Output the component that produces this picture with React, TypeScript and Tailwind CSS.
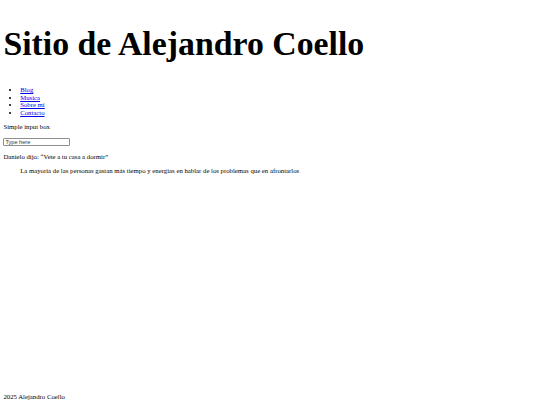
import React from 'react';

export default function App() {
  return (
    <div className="min-h-screen flex flex-col bg-white text-black px-[3.4px] font-['Liberation_Serif','Times_New_Roman',serif] text-[6.75px] leading-[7.67px]">
      <header>
        <h1 className="text-[33.8px] font-bold leading-[39px] mt-[24px] mb-[23px]">Sitio de Alejandro Coello</h1>
        <nav>
          <ul className="list-disc pl-[16.8px]">
            <li><a href="#" className="text-[#0000ee] underline">Blog</a></li>
            <li><a href="#" className="text-[#0000ee] underline">Musica</a></li>
            <li><a href="#" className="text-[#0000ee] underline">Sobre mi</a></li>
            <li><a href="#" className="text-[#0000ee] underline">Contacto</a></li>
          </ul>
        </nav>
      </header>

      <main>
        <p className="my-[6.72px]">Simple input box</p>
        <input
          type="text"
          placeholder="Type here"
          className="block w-[67px] h-[8px] border border-[#8f8f8f] rounded-[1px] px-[1px] text-[5.6px] leading-[6px] font-['Liberation_Sans',Arial,sans-serif] placeholder:text-[#333]"
        />
        <p className="my-[6.72px]">Danielo dijo: “Vete a tu casa a dormir”</p>
        <blockquote className="mx-[16.8px] my-[6.72px]">
          La mayoria de las personas gastan más tiempo y energias en hablar de los problemas que en afrontarlos
        </blockquote>
      </main>

      <footer className="mt-auto mb-[4px]">2025 Alejandro Coello</footer>
    </div>
  );
}
